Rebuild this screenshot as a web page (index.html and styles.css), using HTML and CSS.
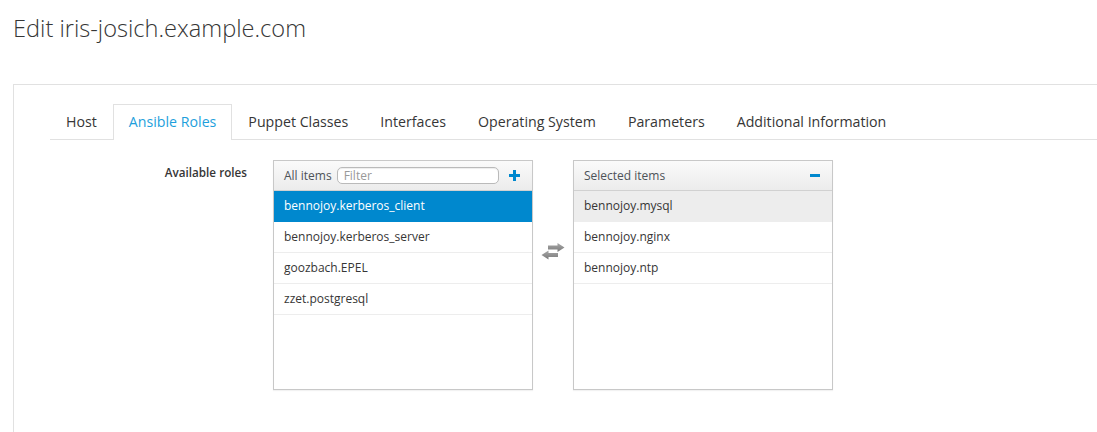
FILE: index.html
```html
<!DOCTYPE html>
<html>
<head>
<meta charset="utf-8">
<link rel="stylesheet" href="styles.css">
</head>
<body>
<h1 class="title">Edit iris-josich.example.com</h1>
<div class="panel">
  <ul class="tabs">
    <li class="tab">Host</li>
    <li class="tab active">Ansible Roles</li>
    <li class="tab">Puppet Classes</li>
    <li class="tab">Interfaces</li>
    <li class="tab">Operating System</li>
    <li class="tab">Parameters</li>
    <li class="tab">Additional Information</li>
  </ul>
  <div class="form-row">
    <label class="label">Available roles</label>
    <div class="duallist">
      <div class="box">
        <div class="box-head">
          <span class="head-title">All items</span>
          <input class="filter" type="text" placeholder="Filter">
          <svg class="icon-plus" width="11" height="11" viewBox="0 0 11 11"><rect x="4" y="0" width="3" height="11" fill="#0088ce"/><rect x="0" y="4" width="11" height="3" fill="#0088ce"/></svg>
        </div>
        <ul class="items">
          <li class="item selected">bennojoy.kerberos_client</li>
          <li class="item">bennojoy.kerberos_server</li>
          <li class="item">goozbach.EPEL</li>
          <li class="item">zzet.postgresql</li>
        </ul>
      </div>
      <div class="swap">
        <svg width="24" height="17" viewBox="0 0 24 17">
          <defs>
            <linearGradient id="g" x1="0" y1="0" x2="0" y2="1">
              <stop offset="0" stop-color="#a8a8a8"/>
              <stop offset="1" stop-color="#7a7a7a"/>
            </linearGradient>
          </defs>
          <path d="M23.5 4.5 L16.5 0 L16.5 2.5 L7 2.5 L7 6.5 L16.5 6.5 L16.5 9 Z" fill="url(#g)"/>
          <path d="M0.5 12 L7.5 7.5 L7.5 10 L17 10 L17 14 L7.5 14 L7.5 16.5 Z" fill="url(#g)"/>
        </svg>
      </div>
      <div class="box">
        <div class="box-head">
          <span class="head-title">Selected items</span>
          <span class="spacer"></span>
          <svg class="icon-minus" width="10" height="3" viewBox="0 0 10 3"><rect x="0" y="0" width="10" height="3" fill="#0088ce"/></svg>
        </div>
        <ul class="items">
          <li class="item hover">bennojoy.mysql</li>
          <li class="item">bennojoy.nginx</li>
          <li class="item">bennojoy.ntp</li>
        </ul>
      </div>
    </div>
  </div>
</div>
</body>
</html>
```

FILE: styles.css
```css
html, body {
  margin: 0;
  padding: 0;
  background: #fff;
  font-family: "Open Sans", "Liberation Sans", sans-serif;
  color: #363636;
}
body {
  padding: 0 0 0 13px;
  overflow: hidden;
  height: 432px;
  box-sizing: border-box;
}
.title {
  margin: 0;
  padding-top: 13px;
  font-size: 23.6px;
  font-weight: 300;
  line-height: 30px;
  color: #363636;
  box-sizing: border-box;
  height: 84px;
}
.panel {
  border: 1px solid #e1e1e1;
  border-right: none;
  border-bottom: none;
  padding: 19px 0 0 36px;
  height: 348px;
  box-sizing: border-box;
}
.tabs {
  list-style: none;
  margin: 0;
  padding: 0;
  display: flex;
  border-bottom: 1px solid #e1e1e1;
  height: 35px;
}
.tab {
  padding: 0 15px;
  border: 1px solid transparent;
  border-bottom: none;
  font-size: 14.2px;
  line-height: 34px;
  color: #363636;
}
.tab.active {
  border-color: #e1e1e1;
  color: #1e9fdc;
  background: #fff;
  height: 35px;
  margin-bottom: -1px;
}
.form-row {
  display: flex;
  margin-top: 20px;
}
.label {
  width: 197px;
  text-align: right;
  font-size: 11.7px;
  font-weight: 600;
  line-height: 24px;
  margin-right: 26px;
}
.duallist {
  display: flex;
}
.box {
  width: 258px;
  height: 228px;
  border: 1px solid #c8c8c8;
  box-shadow: 0 1px 1px rgba(0,0,0,0.05);
  background: #fff;
}
.box-head {
  height: 29px;
  border-bottom: 1px solid #d1d1d1;
  background: linear-gradient(#fafafa, #ececec);
  display: flex;
  align-items: center;
  padding: 0 10px 0 10px;
  font-size: 12px;
  color: #4d5258;
}
.head-title {
  margin-right: 5px;
}
.filter {
  width: 162px;
  height: 17px;
  box-sizing: border-box;
  border: 1px solid #bababa;
  border-radius: 5px;
  padding: 0 6px;
  font-family: inherit;
  font-size: 12px;
  color: #333;
  box-shadow: inset 0 1px 1px rgba(0,0,0,0.075);
}
.filter::placeholder {
  color: #999;
}
.icon-plus {
  margin-left: auto;
  margin-right: 2px;
}
.spacer {
  flex: 1;
}
.icon-minus {
  margin-right: 2px;
}
.items {
  list-style: none;
  margin: 0;
  padding: 0;
}
.item {
  height: 30px;
  line-height: 30px;
  border-bottom: 1px solid #ededed;
  padding: 0 10px;
  font-size: 12px;
  color: #363636;
}
.item.selected {
  background: #0088ce;
  color: #fff;
  border-bottom-color: #0088ce;
}
.item.hover {
  background: #ededed;
}
.swap {
  width: 40px;
  display: flex;
  align-items: flex-start;
  justify-content: center;
  padding-top: 83px;
}
```
